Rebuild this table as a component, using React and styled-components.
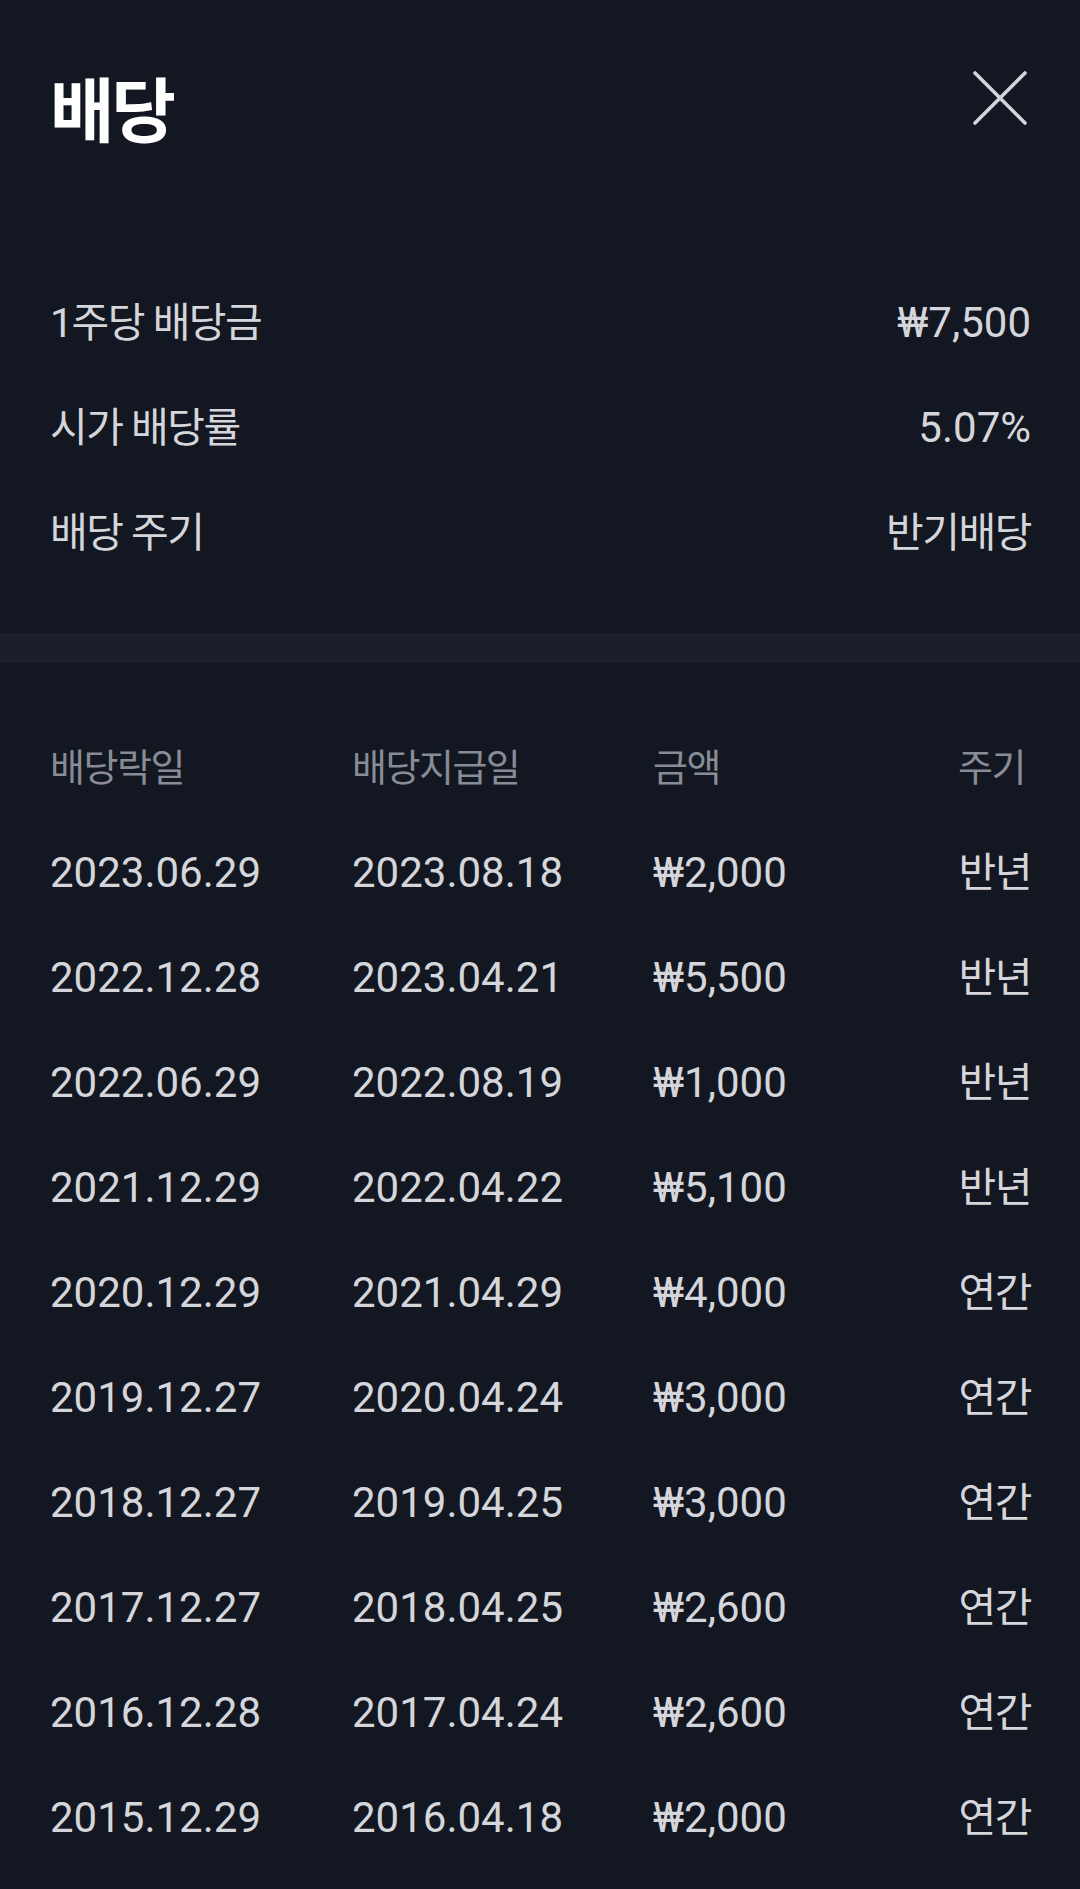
import React from 'react';
import styled, {createGlobalStyle} from 'styled-components';

const GlobalStyle = createGlobalStyle`
  html, body {
    margin: 0;
    padding: 0;
    background: #131721;
  }
  body {
    font-family: Roboto, "Noto Sans CJK KR", "Noto Sans", sans-serif;
    color: #d5d6db;
  }
`

const Page = styled.div`
  width: 1080px;
  min-height: 1889px;
  background: #131721;
  overflow: hidden;
`

const Header = styled.div`
  display: flex;
  justify-content: space-between;
  align-items: flex-start;
  padding: 72px 50px 0 50px;
`

const Title = styled.h1`
  margin: 0;
  font-family: "Noto Sans CJK KR", sans-serif;
  font-size: 70px;
  line-height: 70px;
  font-weight: 700;
  letter-spacing: -3px;
  color: #ffffff;
`

const CloseButton = styled.button`
  width: 56px;
  height: 56px;
  margin-top: -2px;
  margin-right: 2px;
  padding: 0;
  border: none;
  background: none;
  display: flex;
  align-items: center;
  justify-content: center;
`

const Summary = styled.div`
  padding: 128px 49px 48px 50px;
`

const SummaryRow = styled.div`
  height: 105px;
  display: flex;
  align-items: center;
  justify-content: space-between;
`

const Text = styled.span`
  font-size: ${p => p.$ko ? '41px' : '42px'};
  letter-spacing: ${p => p.$ko ? '-1.5px' : '0'};
  line-height: 50px;
  color: ${p => p.$muted ? '#878c96' : '#d5d6db'};
  white-space: nowrap;
`

const Divider = styled.div`
  height: 30px;
  background: #1b1f2a;
`

const Table = styled.div`
  padding: 52px 49px 40px 50px;
`

const Row = styled.div`
  height: 105px;
  display: grid;
  grid-template-columns: 302px 301px 1fr auto;
  align-items: center;

  & > :last-child {
    justify-self: end;
  }
`

const HeadText = styled(Text)`
  font-size: 38px;
  margin-right: ${p => p.$end ? '6px' : '0'};
`

const data = [
    ['2023.06.29', '2023.08.18', '₩2,000', '반년'],
    ['2022.12.28', '2023.04.21', '₩5,500', '반년'],
    ['2022.06.29', '2022.08.19', '₩1,000', '반년'],
    ['2021.12.29', '2022.04.22', '₩5,100', '반년'],
    ['2020.12.29', '2021.04.29', '₩4,000', '연간'],
    ['2019.12.27', '2020.04.24', '₩3,000', '연간'],
    ['2018.12.27', '2019.04.25', '₩3,000', '연간'],
    ['2017.12.27', '2018.04.25', '₩2,600', '연간'],
    ['2016.12.28', '2017.04.24', '₩2,600', '연간'],
    ['2015.12.29', '2016.04.18', '₩2,000', '연간'],
]

const App = () => {
    return (
        <Page>
            <GlobalStyle/>
            <Header>
                <Title>배당</Title>
                <CloseButton aria-label="닫기">
                    <svg width="56" height="56" viewBox="0 0 56 56">
                        <path d="M3 3 L53 53 M53 3 L3 53" stroke="#d2d4db" strokeWidth="3.6" strokeLinecap="round"/>
                    </svg>
                </CloseButton>
            </Header>

            <Summary>
                <SummaryRow>
                    <Text $ko>1주당 배당금</Text>
                    <Text>₩7,500</Text>
                </SummaryRow>
                <SummaryRow>
                    <Text $ko>시가 배당률</Text>
                    <Text>5.07%</Text>
                </SummaryRow>
                <SummaryRow>
                    <Text $ko>배당 주기</Text>
                    <Text $ko>반기배당</Text>
                </SummaryRow>
            </Summary>

            <Divider/>

            <Table>
                <Row>
                    <HeadText $ko $muted>배당락일</HeadText>
                    <HeadText $ko $muted>배당지급일</HeadText>
                    <HeadText $ko $muted>금액</HeadText>
                    <HeadText $ko $muted $end>주기</HeadText>
                </Row>
                {data.map(item => (
                    <Row key={item[0]}>
                        <Text>{item[0]}</Text>
                        <Text>{item[1]}</Text>
                        <Text>{item[2]}</Text>
                        <Text $ko>{item[3]}</Text>
                    </Row>
                ))}
            </Table>
        </Page>
    );
};

export default App;
